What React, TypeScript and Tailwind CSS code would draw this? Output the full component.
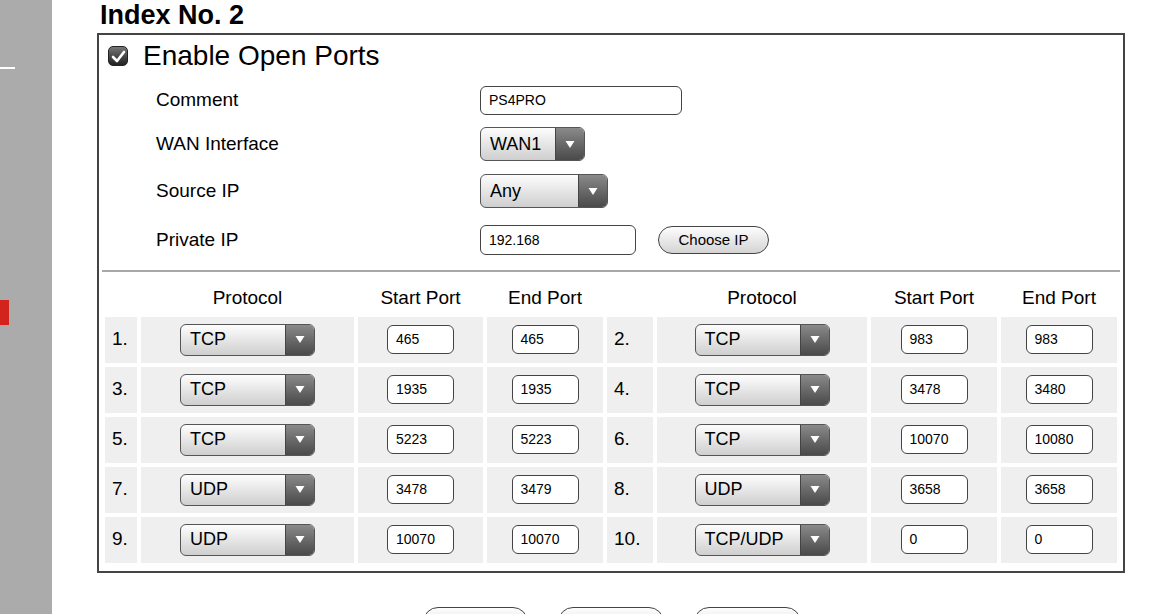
import React from "react";

const rows: [string, string, string, string][] = [
  ["1.", "TCP", "465", "465"],
  ["2.", "TCP", "983", "983"],
  ["3.", "TCP", "1935", "1935"],
  ["4.", "TCP", "3478", "3480"],
  ["5.", "TCP", "5223", "5223"],
  ["6.", "TCP", "10070", "10080"],
  ["7.", "UDP", "3478", "3479"],
  ["8.", "UDP", "3658", "3658"],
  ["9.", "UDP", "10070", "10070"],
  ["10.", "TCP/UDP", "0", "0"],
];

function Select({ value, className }: { value: string; className: string }) {
  return (
    <div
      className={`flex overflow-hidden rounded-[6px] border border-[#555] bg-gradient-to-b from-[#fdfdfd] to-[#cfcfcf] ${className}`}
    >
      <div className="flex flex-1 items-center pl-[9px] text-[18px] text-black">{value}</div>
      <div className="flex w-[29px] items-center justify-center border-l border-[#444] bg-gradient-to-b from-[#8a8a8a] to-[#4a4a4a]">
        <svg width="10" height="9" viewBox="0 0 10 9">
          <path d="M0.5 1 L9.5 1 L5 8 Z" fill="#fff" />
        </svg>
      </div>
    </div>
  );
}

function TextBox({ value, className }: { value: string; className: string }) {
  return (
    <div
      className={`flex items-center rounded-[6px] border border-[#444] bg-white pl-[8px] text-[14px] text-black ${className}`}
    >
      {value}
    </div>
  );
}

function PortRow({ r }: { r: [string, string, string, string] }) {
  return (
    <>
      <td className="bg-[#efefef] pl-[7px] text-[19px]">{r[0]}</td>
      <td className="bg-[#efefef]">
        <Select value={r[1]} className="mx-auto h-[32px] w-[135px]" />
      </td>
      <td className="bg-[#efefef]">
        <TextBox value={r[2]} className="mx-auto h-[29px] w-[67px]" />
      </td>
      <td className="bg-[#efefef]">
        <TextBox value={r[3]} className="mx-auto h-[29px] w-[67px]" />
      </td>
    </>
  );
}

export default function App() {
  const pairs = [0, 2, 4, 6, 8].map((i) => [rows[i], rows[i + 1]]);

  return (
    <div
      className="flex h-[614px] w-[1170px] overflow-hidden bg-white text-black"
      style={{ fontFamily: '"Liberation Sans", Arial, sans-serif' }}
    >
      {/* sidebar */}
      <div className="flex w-[52px] shrink-0 flex-col bg-[#ababab]">
        <div className="mt-[67px] h-[2px] w-[15px] bg-white" />
        <div className="mt-[231px] h-[25px] w-[9px] bg-[#d2231c]" />
      </div>

      <div className="flex-1 pl-[45px]">
        <h1 className="pl-[3px] text-[27px] font-bold leading-[30px]">Index No. 2</h1>

        <div className="mt-[3px] w-[1028px] border-2 border-[#444] pb-[4px]">
          <div className="flex h-[42px] items-center pl-[9px]">
            <div className="flex h-[20px] w-[20px] items-center justify-center rounded-[5px] border border-[#222] bg-gradient-to-b from-[#777] to-[#222]">
              <svg width="15" height="13" viewBox="0 0 15 13">
                <path
                  d="M2 7 L6 11 L13 2"
                  fill="none"
                  stroke="#fff"
                  strokeWidth="2.6"
                  strokeLinecap="round"
                  strokeLinejoin="round"
                />
              </svg>
            </div>
            <span className="ml-[15px] text-[28px] leading-none">Enable Open Ports</span>
          </div>

          <div className="mt-[8px] flex flex-col pl-[57px] text-[19px]">
            <div className="flex h-[30px] items-center">
              <span className="w-[324px]">Comment</span>
              <TextBox value="PS4PRO" className="h-[29px] w-[202px]" />
            </div>
            <div className="mt-[12px] flex h-[34px] items-center">
              <span className="w-[324px]">WAN Interface</span>
              <Select value="WAN1" className="h-[34px] w-[105px]" />
            </div>
            <div className="mt-[13px] flex h-[34px] items-center">
              <span className="w-[324px]">Source IP</span>
              <Select value="Any" className="h-[34px] w-[128px]" />
            </div>
            <div className="mt-[17px] flex h-[30px] items-center">
              <span className="w-[324px]">Private IP</span>
              <TextBox value="192.168" className="h-[30px] w-[156px]" />
              <button className="ml-[22px] h-[28px] w-[111px] rounded-full border border-[#444] bg-gradient-to-b from-[#fdfdfd] to-[#d4d4d4] text-[15px]">
                Choose IP
              </button>
            </div>
          </div>

          <div className="mx-[3px] mt-[15px] h-[2px] bg-[#a8a8a8]" />

          <table className="mx-[2px] mt-[8px] w-[1020px] table-fixed border-separate border-spacing-[4px] text-[19px]">
            <colgroup>
              <col className="w-[32px]" />
              <col className="w-[213px]" />
              <col className="w-[125px]" />
              <col className="w-[116px]" />
              <col className="w-[46px]" />
              <col className="w-[210px]" />
              <col className="w-[126px]" />
              <col className="w-[116px]" />
            </colgroup>
            <thead>
              <tr className="h-[28px]">
                <th className="font-normal" />
                <th className="font-normal">Protocol</th>
                <th className="font-normal">Start Port</th>
                <th className="font-normal">End Port</th>
                <th className="font-normal" />
                <th className="font-normal">Protocol</th>
                <th className="font-normal">Start Port</th>
                <th className="font-normal">End Port</th>
              </tr>
            </thead>
            <tbody>
              {pairs.map(([a, b]) => (
                <tr key={a[0]} className="h-[46px]">
                  <PortRow r={a} />
                  <PortRow r={b} />
                </tr>
              ))}
            </tbody>
          </table>
        </div>

        <div className="mt-[34px] flex pl-[326px]">
          <button className="h-[30px] w-[105px] rounded-full border border-[#444] bg-gradient-to-b from-[#fdfdfd] to-[#d4d4d4]" />
          <button className="ml-[30px] h-[30px] w-[106px] rounded-full border border-[#444] bg-gradient-to-b from-[#fdfdfd] to-[#d4d4d4]" />
          <button className="ml-[30px] h-[30px] w-[107px] rounded-full border border-[#444] bg-gradient-to-b from-[#fdfdfd] to-[#d4d4d4]" />
        </div>
      </div>
    </div>
  );
}
